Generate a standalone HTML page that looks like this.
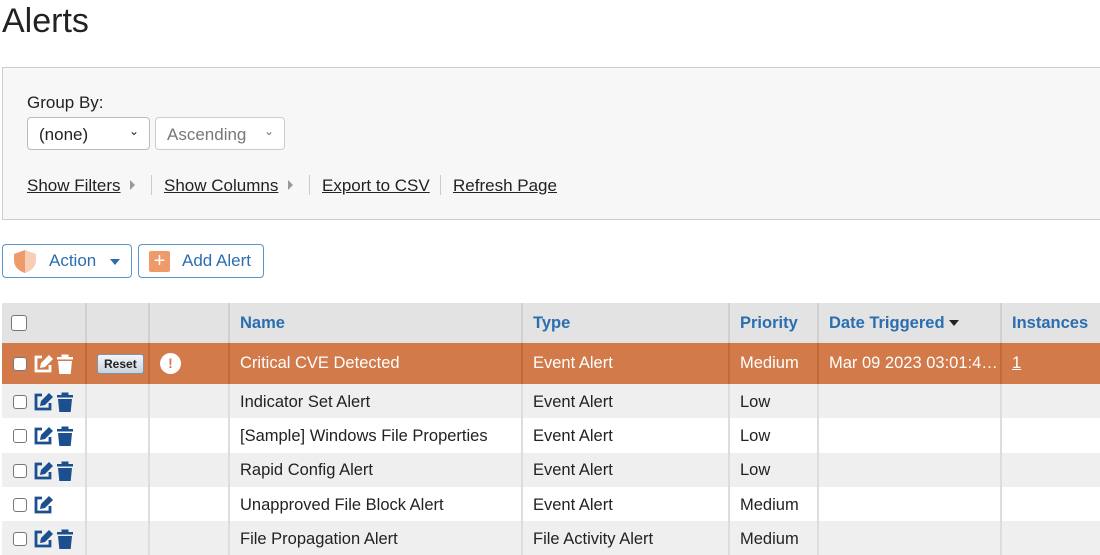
<!DOCTYPE html>
<html><head><style>
*{box-sizing:border-box;margin:0;padding:0}
body{width:1100px;height:553px;overflow:hidden;background:#fff;font-family:"Liberation Sans",Arial,sans-serif;color:#222;position:relative}
.abs{position:absolute}
h1{position:absolute;left:2px;top:2px;font-weight:300;font-size:34px;color:#222}
.panel{position:absolute;left:2px;top:67px;width:1110px;height:153px;background:#f7f7f7;border:1px solid #ccc}
.sel{position:absolute;top:117px;height:33px;border:1px solid #bbb;border-radius:4px;background:#fff;font-size:17px;padding:7px 11px}
.lnk{position:absolute;top:176px;font-size:17px;text-decoration:underline;color:#222}
.sep{position:absolute;top:175px;width:1px;height:20px;background:#ccc}
.tri{position:absolute;top:180px;width:0;height:0;border-left:5px solid #999;border-top:5px solid transparent;border-bottom:5px solid transparent}
.btn{position:absolute;top:244px;height:34px;border:1px solid #5b93c7;border-radius:4px;background:#fff;color:#2a6eb0;font-size:17px}
table{position:absolute;left:2px;top:303px;border-collapse:collapse;table-layout:fixed;width:1110px}
td,th{border-left:2px solid #ddd;font-size:16.5px;text-align:left;padding:0 0 0 10px;white-space:nowrap;overflow:hidden}
th{height:40px;background:#e3e3e3;color:#2a6eb0;font-weight:bold;border-left:2px solid #d0d0d0}
tr.r td{height:34.3px;padding-top:2px}
tr.g td{background:#efefef}
tr.o td{background:#d27a4a;color:#fff;height:41px;border-left:2px solid #c06a3c}
.cb{display:inline-block;width:14px;height:14px;border:1px solid #777;border-radius:3px;background:#fff;vertical-align:middle}
td:first-child{padding-left:11px}
</style></head><body>
<h1>Alerts</h1>
<div class="panel"></div>
<div class="abs" style="left:27px;top:93px;font-size:17px">Group By:</div>
<div class="sel" style="left:27px;width:123px">(none)<span class="abs" style="right:10px;top:6px;font-size:12px">&#8964;</span></div>
<div class="sel" style="left:155px;width:130px;color:#777;border-color:#ccc">Ascending<span class="abs" style="right:10px;top:6px;font-size:12px">&#8964;</span></div>
<span class="lnk" style="left:27px">Show Filters</span><div class="tri" style="left:130px"></div>
<div class="sep" style="left:151px"></div>
<span class="lnk" style="left:164px">Show Columns</span><div class="tri" style="left:288px"></div>
<div class="sep" style="left:309px"></div>
<span class="lnk" style="left:322px">Export to CSV</span>
<div class="sep" style="left:440px"></div>
<span class="lnk" style="left:453px">Refresh Page</span>

<div class="btn" style="left:2px;width:130px">
<svg class="abs" style="left:10px;top:4px" width="24" height="25" viewBox="0 0 24 25"><path d="M12 1L1 5v6c0 7 5 11 11 13z" fill="#ee9a6a"/><path d="M12 1l11 4v6c0 7-5 11-11 13z" fill="#f6cdb5"/></svg>
<span class="abs" style="left:46px;top:6px">Action</span>
<span class="abs" style="left:107px;top:14px;border-top:6px solid #2a6eb0;border-left:5px solid transparent;border-right:5px solid transparent"></span></div>
<div class="btn" style="left:138px;width:126px">
<span class="abs" style="left:10px;top:6px;width:21px;height:21px;background:#ee9a6a;border-radius:2px;color:#fff;text-align:center;font-size:20px;line-height:20px">+</span>
<span class="abs" style="left:43px;top:6px">Add Alert</span></div>

<table>
<colgroup><col style="width:84px"><col style="width:63px"><col style="width:80px"><col style="width:293px"><col style="width:207px"><col style="width:89px"><col style="width:183px"><col style="width:111px"></colgroup>
<tr><th style="border-left:none;padding-left:9px"><span class="cb" style="width:16px;height:16px"></span></th><th></th><th></th><th>Name</th><th>Type</th><th>Priority</th><th>Date Triggered <span style="display:inline-block;border-top:6px solid #222;border-left:5px solid transparent;border-right:5px solid transparent;vertical-align:middle"></span></th><th>Instances</th></tr>
<tr class="o"><td style="border-left:none"><span class="cb"></span> <svg width="46" height="22" viewBox="0 0 46 22" style="vertical-align:middle"><path d="M10 4H4v14h14v-6" fill="none" stroke="#fff" stroke-width="2.8"/><path d="M8 15l1-5 8-8 4 4-8 8z" fill="#fff"/><path d="M25 4h16v2.5H25zM29.5 1.5h7v2.5h-7zM26 8h14l-1.3 13H27.3z" fill="#fff"/></svg></td>
<td><span style="display:inline-block;background:linear-gradient(#f4f6f8,#c9d3dd);border:1px solid #7f93a8;border-radius:3px;color:#222;font-size:12px;font-weight:bold;padding:2px 6px">Reset</span></td>
<td><span style="display:inline-block;width:21px;height:21px;border-radius:50%;background:#fff;color:#d27a4a;text-align:center;font-weight:bold;font-size:14px;line-height:21px">!</span></td>
<td>Critical CVE Detected</td><td>Event Alert</td><td>Medium</td><td>Mar 09 2023 03:01:4…</td><td><u>1</u></td></tr>
<tr class="r g"><td style="border-left:none"><span class="cb"></span> <svg width="46" height="22" viewBox="0 0 46 22" style="vertical-align:middle"><path d="M10 4H4v14h14v-6" fill="none" stroke="#1c4f8f" stroke-width="2.8"/><path d="M8 15l1-5 8-8 4 4-8 8z" fill="#1c4f8f"/><path d="M25 4h16v2.5H25zM29.5 1.5h7v2.5h-7zM26 8h14l-1.3 13H27.3z" fill="#1c4f8f"/></svg></td><td></td><td></td><td>Indicator Set Alert</td><td>Event Alert</td><td>Low</td><td></td><td></td></tr>
<tr class="r"><td style="border-left:none"><span class="cb"></span> <svg width="46" height="22" viewBox="0 0 46 22" style="vertical-align:middle"><path d="M10 4H4v14h14v-6" fill="none" stroke="#1c4f8f" stroke-width="2.8"/><path d="M8 15l1-5 8-8 4 4-8 8z" fill="#1c4f8f"/><path d="M25 4h16v2.5H25zM29.5 1.5h7v2.5h-7zM26 8h14l-1.3 13H27.3z" fill="#1c4f8f"/></svg></td><td></td><td></td><td>[Sample] Windows File Properties</td><td>Event Alert</td><td>Low</td><td></td><td></td></tr>
<tr class="r g"><td style="border-left:none"><span class="cb"></span> <svg width="46" height="22" viewBox="0 0 46 22" style="vertical-align:middle"><path d="M10 4H4v14h14v-6" fill="none" stroke="#1c4f8f" stroke-width="2.8"/><path d="M8 15l1-5 8-8 4 4-8 8z" fill="#1c4f8f"/><path d="M25 4h16v2.5H25zM29.5 1.5h7v2.5h-7zM26 8h14l-1.3 13H27.3z" fill="#1c4f8f"/></svg></td><td></td><td></td><td>Rapid Config Alert</td><td>Event Alert</td><td>Low</td><td></td><td></td></tr>
<tr class="r"><td style="border-left:none"><span class="cb"></span> <svg width="46" height="22" viewBox="0 0 46 22" style="vertical-align:middle"><path d="M10 4H4v14h14v-6" fill="none" stroke="#1c4f8f" stroke-width="2.8"/><path d="M8 15l1-5 8-8 4 4-8 8z" fill="#1c4f8f"/></svg></td><td></td><td></td><td>Unapproved File Block Alert</td><td>Event Alert</td><td>Medium</td><td></td><td></td></tr>
<tr class="r g"><td style="border-left:none"><span class="cb"></span> <svg width="46" height="22" viewBox="0 0 46 22" style="vertical-align:middle"><path d="M10 4H4v14h14v-6" fill="none" stroke="#1c4f8f" stroke-width="2.8"/><path d="M8 15l1-5 8-8 4 4-8 8z" fill="#1c4f8f"/><path d="M25 4h16v2.5H25zM29.5 1.5h7v2.5h-7zM26 8h14l-1.3 13H27.3z" fill="#1c4f8f"/></svg></td><td></td><td></td><td>File Propagation Alert</td><td>File Activity Alert</td><td>Medium</td><td></td><td></td></tr>
</table>
</body></html>
